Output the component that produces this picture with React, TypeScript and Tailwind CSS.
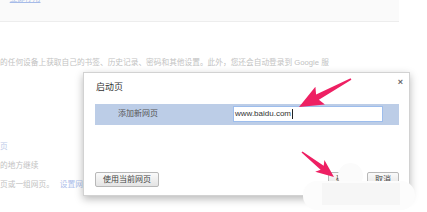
import React from "react";

type Pt = [number, number];

// builds a tapered arrow outline from tail to tip
function arrowPoints(tail: Pt, tip: Pt, headLen: number, headHalf: number, tailW: number, neckW: number) {
  const dx = tip[0] - tail[0];
  const dy = tip[1] - tail[1];
  const len = Math.hypot(dx, dy);
  const ux = dx / len;
  const uy = dy / len;
  const nx = -uy;
  const ny = ux;
  const bx = tip[0] - ux * headLen;
  const by = tip[1] - uy * headLen;
  const pts: Pt[] = [
    [tail[0] + (nx * tailW) / 2, tail[1] + (ny * tailW) / 2],
    [bx + (nx * neckW) / 2, by + (ny * neckW) / 2],
    [bx - ux * 3 + nx * headHalf, by - uy * 3 + ny * headHalf],
    tip,
    [bx - ux * 3 - nx * headHalf, by - uy * 3 - ny * headHalf],
    [bx - (nx * neckW) / 2, by - (ny * neckW) / 2],
    [tail[0] - (nx * tailW) / 2, tail[1] - (ny * tailW) / 2],
  ];
  return pts.map((p) => `${p[0].toFixed(1)},${p[1].toFixed(1)}`).join(" ");
}

function Button({ label, className }: { label: string; className?: string }) {
  return (
    <div
      className={`flex h-[15px] items-center justify-center rounded-[2px] border border-[#b8b8b8] bg-gradient-to-b from-[#fafafa] to-[#e4e4e4] text-[8px] text-[#444] ${className ?? ""}`}
    >
      {label}
    </div>
  );
}

export default function App() {
  const font = { fontFamily: '"Liberation Sans", "Noto Sans CJK SC", sans-serif' };

  return (
    <div
      className="relative h-[212px] w-[427px] overflow-hidden bg-white"
      style={font}
    >
      {/* settings page behind the dialog */}
      <div className="flex flex-col text-[7.7px] leading-none text-[#c2c2c2]">
        <div className="h-[22px] w-[399px] border-b border-[#ededed] bg-[#fafafa]">
          <div className="-mt-[5px] flex items-center gap-[4px] pl-[3px]">
            <span className="text-[#c8c8c8]">•</span>
            <span className="text-[#a6bbe8] underline">立即停用</span>
          </div>
        </div>
        <div className="mt-[37px] whitespace-nowrap">
          的任何设备上获取自己的书签、历史记录、密码和其他设置。此外，您还会自动登录到 Google 服
        </div>
        <div className="mt-[76px] text-[#bccae8]">页</div>
        <div className="mt-[12px]">的地方继续</div>
        <div className="mt-[11px] flex gap-[6px] whitespace-nowrap">
          <span>页或一组网页。</span>
          <span className="text-[#adc0ea]">设置网页</span>
        </div>
      </div>

      {/* dialog */}
      <div className="absolute left-[83px] top-[72px] flex h-[124px] w-[327px] flex-col border border-[#d2d2d2] bg-white shadow-[0_3px_8px_rgba(0,0,0,0.28)]">
        <div className="flex items-start justify-between pl-[12px] pr-[6px] pt-[8px]">
          <span className="text-[9px] text-[#333]">启动页</span>
          <span className="-mt-[3px] text-[9px] font-bold leading-none text-[#666]">×</span>
        </div>
        <div className="ml-[11px] mt-[9px] flex h-[21px] w-[304px] items-center bg-[#bccde7]">
          <span className="ml-[23px] w-[115px] text-[8px] text-[#555]">添加新网页</span>
          <div className="flex h-[16px] w-[150px] items-center border border-[#9dbdec] bg-white pl-[1px] text-[8px] text-[#333]">
            www.baidu.com
            <span className="ml-[1px] h-[10px] w-px bg-[#222]" />
          </div>
        </div>
        <div className="mt-auto mb-[8px] flex items-center pl-[11px] pr-[10px]">
          <Button label="使用当前网页" className="w-[64px]" />
          <div className="ml-auto flex gap-[7px]">
            <Button label="确定" className="w-[32px]" />
            <Button label="取消" className="w-[32px]" />
          </div>
        </div>
      </div>

      {/* watermark blot */}
      <div className="absolute left-[338px] top-[163px] h-[25px] w-[25px] rounded-full bg-[#fbfbfb]" />
      <div className="absolute left-[303px] top-[181px] h-[29px] w-[112px] rounded-[14px] bg-[#fcfcfc]" />
      <div className="absolute left-[322px] top-[183px] h-[22px] w-[78px] bg-[#f6f6f6]" />

      {/* annotation arrows */}
      <svg className="pointer-events-none absolute left-0 top-0" width="427" height="212">
        <polygon points={arrowPoints([351, 79], [299, 107], 21, 10, 1.5, 6)} fill="#ee2063" />
        <polygon points={arrowPoints([302, 152], [334, 177], 15, 7.5, 1.5, 5)} fill="#ee2063" />
      </svg>
    </div>
  );
}
